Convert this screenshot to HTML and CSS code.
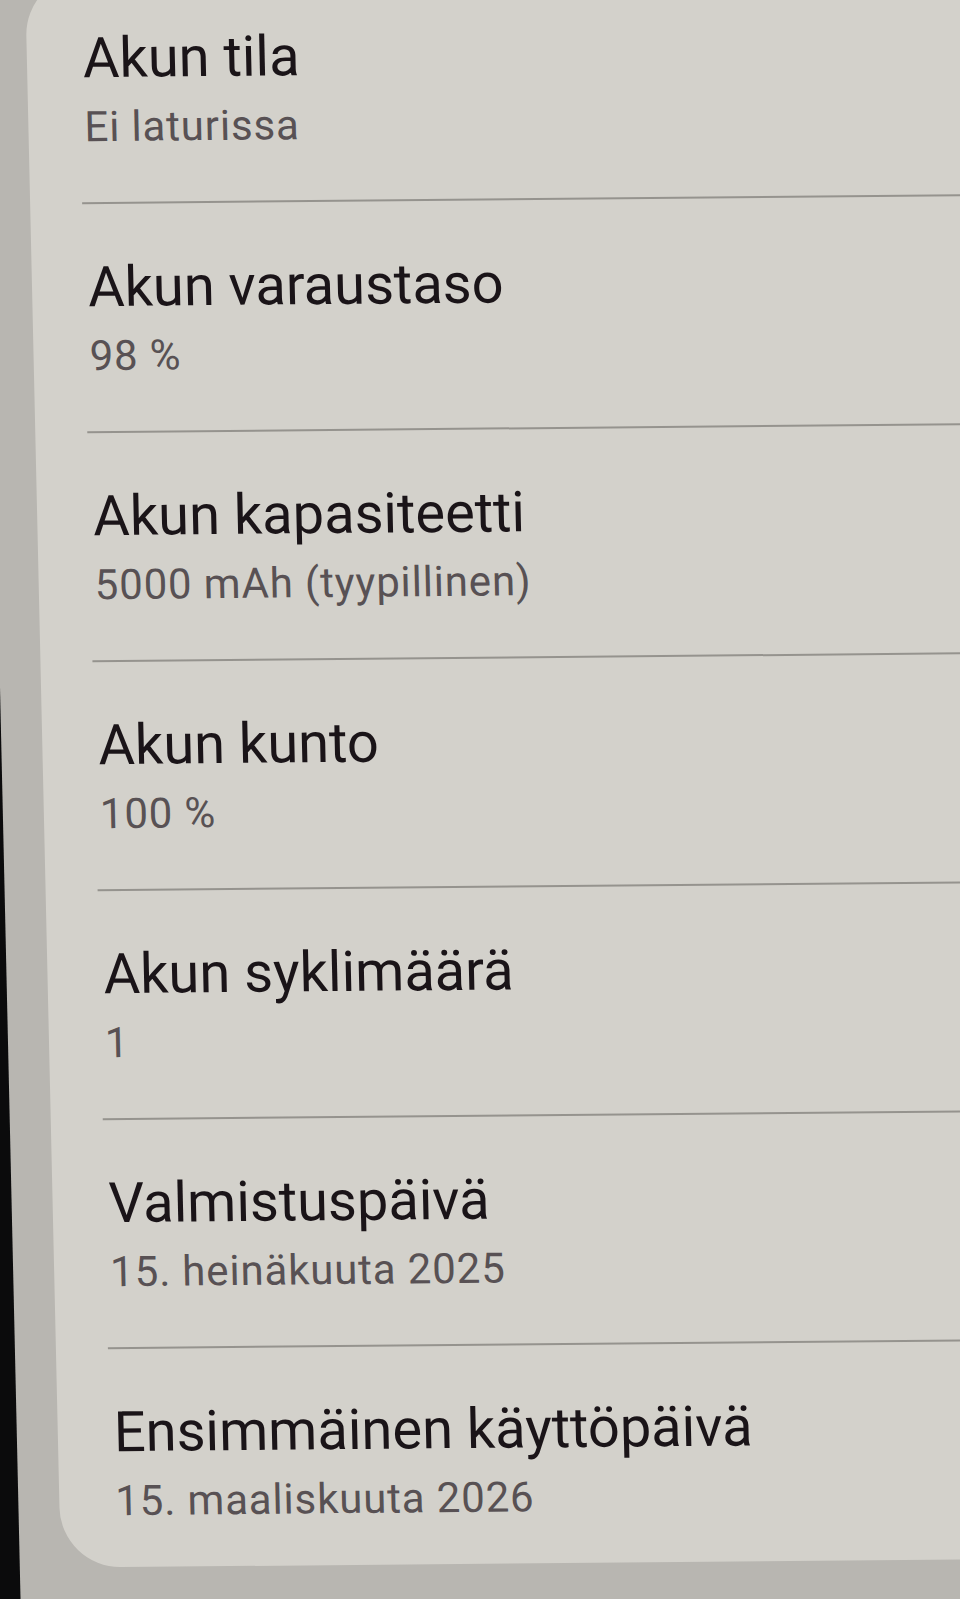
FILE: index.html
```html
<!DOCTYPE html>
<html lang="fi">
<head>
  <meta charset="UTF-8">
  <title>Akun tiedot</title>
  <meta name="viewport" content="width=device-width, initial-scale=1.0">
  <link rel="stylesheet" href="styles.css">
</head>
<body>
  <!-- SCREEN -->
  <div class="screen">
    <div class="card">
      <ul class="info-list">
        <li class="info-item">
          <div class="info-title">Akun tila</div>
          <div class="info-value">Ei laturissa</div>
        </li>
        <li class="info-item">
          <div class="info-title">Akun varaustaso</div>
          <div class="info-value">98 %</div>
        </li>
        <li class="info-item">
          <div class="info-title">Akun kapasiteetti</div>
          <div class="info-value">5000 mAh (tyypillinen)</div>
        </li>
        <li class="info-item">
          <div class="info-title">Akun kunto</div>
          <div class="info-value">100 %</div>
        </li>
        <li class="info-item">
          <div class="info-title">Akun syklimäärä</div>
          <div class="info-value">1</div>
        </li>
        <li class="info-item">
          <div class="info-title">Valmistuspäivä</div>
          <div class="info-value">15. heinäkuuta 2025</div>
        </li>
        <li class="info-item">
          <div class="info-title">Ensimmäinen käyttöpäivä</div>
          <div class="info-value">15. maaliskuuta 2026</div>
        </li>
      </ul>
    </div>
  </div>
</body>
</html>
```

FILE: styles.css
```css
* {
  margin: 0;
  padding: 0;
  box-sizing: border-box;
}

html, body {
  height: 1599px;
  overflow: hidden;
}

body {
  font-family: Roboto, 'Liberation Sans', sans-serif;
  background: #0b0b0c;
}

/* phone screen, seen a little off-axis */
.screen {
  margin-left: -16px;
  min-height: 1660px;
  background: #b8b6b1;
  transform: matrix(1, -0.009, 0.0225, 1, 0, 0);
  transform-origin: 0 0;
}

/* CARD */
.card {
  margin: -24px -80px 0 41px;
  background: #d3d1cb;
  border-radius: 60px;
}

.info-list {
  list-style: none;
  padding-left: 52px;
}

.info-item {
  padding: 51px 0 49px 4px;
  border-bottom: 2px solid #95938e;
}

.info-item:last-child {
  padding-bottom: 40px;
  border-bottom: none;
}

.info-title {
  font-size: 56px;
  line-height: 64px;
  color: #1a1418;
}

.info-value {
  margin-top: 11px;
  font-size: 42px;
  line-height: 52px;
  letter-spacing: 0.02em;
  color: #585154;
}
```
